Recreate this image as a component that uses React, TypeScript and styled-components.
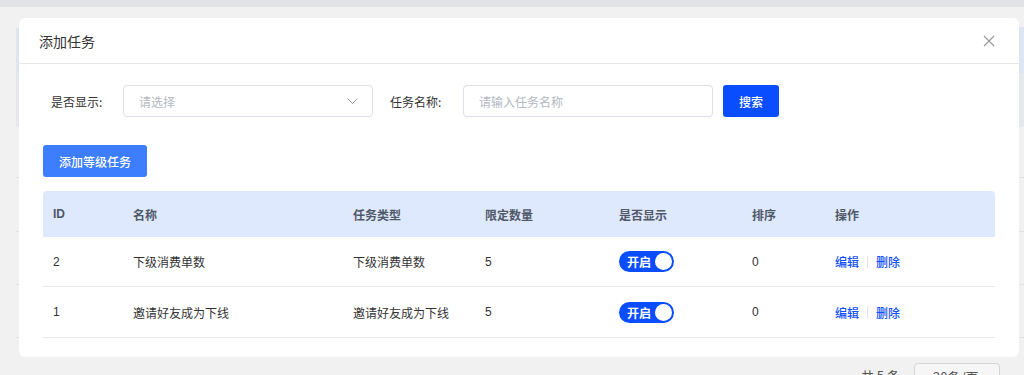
import React from "react";
import styled, { createGlobalStyle } from "styled-components";

const Global = createGlobalStyle`
  html, body { margin: 0; padding: 0; }
  body {
    font-family: "Liberation Sans", "Noto Sans CJK SC", sans-serif;
    font-size: 12px;
    color: #333;
    background: #f1f1f1;
  }
  * { box-sizing: border-box; }
`;

const Screen = styled.div`
  position: relative;
  width: 1024px;
  height: 375px;
  overflow: hidden;
  background: #f1f1f1;
`;

/* ---------- background page ---------- */
const TopBand = styled.div`
  height: 7px;
  background: #e2e3e8;
`;

const PageBody = styled.div`
  padding: 20px 0 0 16px;
  display: flex;
  flex-direction: column;
`;

const BgHead = styled.div`
  height: 46px;
  background: #dde5f3;
  border-radius: 4px 0 0 0;
`;

const BgRow = styled.div<{ $h: number; $tint?: boolean }>`
  height: ${(p) => p.$h}px;
  background: ${(p) => (p.$tint ? "#e7e8ec" : "#f1f1f1")};
  border-bottom: ${(p) => (p.$tint ? "none" : "1px solid #e2e2e6")};
`;

const Pager = styled.div`
  display: flex;
  justify-content: flex-end;
  align-items: flex-start;
  gap: 14px;
  padding: 25px 24px 0 0;
  font-size: 13px;
  color: #555;
  font-family: "Noto Sans CJK SC", sans-serif;
`;

const PagerText = styled.span`
  padding-top: 3px;
`;

const PagerSelect = styled.div`
  width: 86px;
  height: 32px;
  border: 1px solid #d4d4da;
  border-radius: 4px;
  background: #f6f6f6;
  padding: 3px 0 0 18px;
  color: #555;
`;

/* ---------- modal ---------- */
const Modal = styled.div`
  position: absolute;
  left: 19px;
  top: 18px;
  width: 1000px;
  height: 339px;
  background: #fff;
  border-radius: 6px;
  display: flex;
  flex-direction: column;
`;

const ModalHeader = styled.div`
  height: 46px;
  display: flex;
  align-items: center;
  justify-content: space-between;
  padding: 0 24px 0 20px;
  border-bottom: 1px solid #e8e8ec;
`;

const Title = styled.div`
  font-size: 14px;
  color: #333;
  font-family: "Noto Sans CJK SC", sans-serif;
`;

const Close = styled.button`
  border: 0;
  background: none;
  padding: 0;
  width: 12px;
  height: 12px;
  display: flex;
  cursor: pointer;
`;

const ModalBody = styled.div`
  padding: 21px 24px 0 24px;
  display: flex;
  flex-direction: column;
`;

const FormRow = styled.div`
  display: flex;
  align-items: center;
  height: 32px;
`;

const Label = styled.label<{ $w: number; $lead: number }>`
  width: ${(p) => p.$w}px;
  margin-left: ${(p) => p.$lead}px;
  flex: none;
  font-family: "Noto Sans CJK SC", sans-serif;
  color: #333;
  font-size: 12px;
`;

const Field = styled.div`
  width: 250px;
  height: 32px;
  flex: none;
  border: 1px solid #dcdfe6;
  border-radius: 4px;
  display: flex;
  align-items: center;
  justify-content: space-between;
  padding: 0 14px 0 15px;
  font-family: "Noto Sans CJK SC", sans-serif;
  color: #b4b8c2;
  font-size: 12px;
`;

const Button = styled.button<{ $tone: "dark" | "light"; $w: number; $lead?: number }>`
  width: ${(p) => p.$w}px;
  height: 32px;
  flex: none;
  margin-left: ${(p) => p.$lead ?? 0}px;
  border: 0;
  border-radius: 3px;
  background: ${(p) => (p.$tone === "dark" ? "#0a4dff" : "#3d7dff")};
  color: #fff;
  font-family: "Noto Sans CJK SC", sans-serif;
  font-size: 12px;
  font-weight: 500;
  padding: 0;
`;

const AddRow = styled.div`
  margin-top: 28px;
  display: flex;
`;

const Table = styled.div`
  margin-top: 14px;
  display: flex;
  flex-direction: column;
`;

const cols = "80px 220px 132px 134px 133px 83px 170px";

const HeadRow = styled.div`
  display: grid;
  grid-template-columns: ${cols};
  height: 46px;
  align-items: center;
  background: #dfe9fd;
  border-radius: 4px 4px 0 0;
`;

const HeadCell = styled.div`
  padding-left: 10px;
  font-family: "Liberation Sans", "Noto Sans CJK SC", sans-serif;
  font-size: 12px;
  font-weight: 600;
  color: #4f5867;
`;

const Row = styled.div<{ $h: number }>`
  display: grid;
  grid-template-columns: ${cols};
  height: ${(p) => p.$h}px;
  align-items: center;
  border-bottom: 1px solid #e8e9ef;
`;

const Cell = styled.div`
  padding-left: 10px;
  font-family: "Liberation Sans", "Noto Sans CJK SC", sans-serif;
  font-size: 12px;
  color: #333;
  display: flex;
  align-items: center;
`;

const Toggle = styled.div`
  width: 55px;
  height: 21px;
  border-radius: 11px;
  background: #0a4dff;
  display: flex;
  align-items: center;
  justify-content: space-between;
  padding: 0 2px 0 8px;
  color: #fff;
  font-family: "Noto Sans CJK SC", sans-serif;
  font-weight: 700;
  font-size: 12px;
`;

const Knob = styled.span`
  width: 17px;
  height: 17px;
  border-radius: 50%;
  background: #fff;
`;

const Action = styled.a`
  color: #1250ff;
  font-family: "Noto Sans CJK SC", sans-serif;
  font-size: 12px;
  font-weight: 500;
  text-decoration: none;
  cursor: pointer;
`;

const Sep = styled.span`
  width: 1px;
  height: 12px;
  background: #dfe4ee;
  margin: 0 8px;
`;

const rows = [
  { id: "2", name: "下级消费单数", type: "下级消费单数", limit: "5", sort: "0", h: 50 },
  { id: "1", name: "邀请好友成为下线", type: "邀请好友成为下线", limit: "5", sort: "0", h: 51 },
];

const headers = ["ID", "名称", "任务类型", "限定数量", "是否显示", "排序", "操作"];

export default function App() {
  return (
    <Screen>
      <Global />
      <TopBand />
      <PageBody>
        <BgHead />
        <BgRow $h={54} $tint />
        <BgRow $h={51} />
        <BgRow $h={54} />
        <BgRow $h={53} />
        <BgRow $h={53} />
        <Pager>
          <PagerText>共 5 条</PagerText>
          <PagerSelect>20条/页</PagerSelect>
        </Pager>
      </PageBody>

      <Modal>
        <ModalHeader>
          <Title>添加任务</Title>
          <Close aria-label="close">
            <svg width="12" height="12" viewBox="0 0 12 12">
              <path d="M1 1L11 11M11 1L1 11" stroke="#999" strokeWidth="1.1" fill="none" />
            </svg>
          </Close>
        </ModalHeader>
        <ModalBody>
          <FormRow>
            <Label $w={72} $lead={8}>是否显示:</Label>
            <Field>
              <span>请选择</span>
              <svg width="11" height="6" viewBox="0 0 11 6">
                <path d="M0.5 0.5L5.5 5.5L10.5 0.5" stroke="#999" strokeWidth="1" fill="none" />
              </svg>
            </Field>
            <Label $w={73} $lead={17}>任务名称:</Label>
            <Field>
              <span>请输入任务名称</span>
            </Field>
            <Button $tone="dark" $w={56} $lead={10}>搜索</Button>
          </FormRow>
          <AddRow>
            <Button $tone="light" $w={104}>添加等级任务</Button>
          </AddRow>
          <Table>
            <HeadRow>
              {headers.map((h) => (
                <HeadCell key={h}>{h}</HeadCell>
              ))}
            </HeadRow>
            {rows.map((r) => (
              <Row key={r.id} $h={r.h}>
                <Cell>{r.id}</Cell>
                <Cell>{r.name}</Cell>
                <Cell>{r.type}</Cell>
                <Cell>{r.limit}</Cell>
                <Cell>
                  <Toggle>
                    <span>开启</span>
                    <Knob />
                  </Toggle>
                </Cell>
                <Cell>{r.sort}</Cell>
                <Cell>
                  <Action>编辑</Action>
                  <Sep />
                  <Action>删除</Action>
                </Cell>
              </Row>
            ))}
          </Table>
        </ModalBody>
      </Modal>
    </Screen>
  );
}
